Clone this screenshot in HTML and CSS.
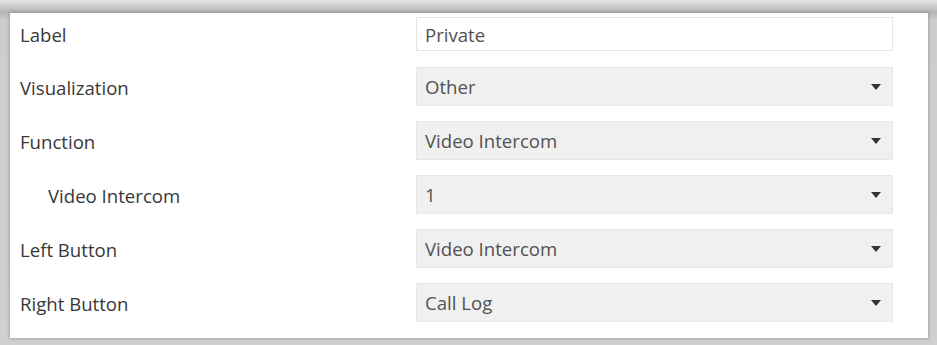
FILE: index.html
```html
<!DOCTYPE html>
<html>
<head>
<meta charset="utf-8">
<link rel="stylesheet" href="styles.css">
</head>
<body>
<div class="frame">
  <div class="panel">
    <div class="row first">
      <div class="label">Label</div>
      <div class="field input">Private</div>
    </div>
    <div class="row">
      <div class="label">Visualization</div>
      <div class="field select"><span>Other</span><i class="arrow"></i></div>
    </div>
    <div class="row">
      <div class="label">Function</div>
      <div class="field select"><span>Video Intercom</span><i class="arrow"></i></div>
    </div>
    <div class="row">
      <div class="label indent">Video Intercom</div>
      <div class="field select"><span>1</span><i class="arrow"></i></div>
    </div>
    <div class="row">
      <div class="label">Left Button</div>
      <div class="field select"><span>Video Intercom</span><i class="arrow"></i></div>
    </div>
    <div class="row">
      <div class="label">Right Button</div>
      <div class="field select"><span>Call Log</span><i class="arrow"></i></div>
    </div>
  </div>
</div>
</body>
</html>
```
FILE: styles.css
```css
html, body {
  margin: 0;
  padding: 0;
}
body {
  width: 937px;
  height: 345px;
  overflow: hidden;
  background: linear-gradient(to bottom, #e6e6e6 0px, #b6b6b6 12px, #cdcdcd 20px, #d0d0d0 100%);
  font-family: "Open Sans", "Noto Sans", sans-serif;
}
.frame {
  padding: 13px 9px 7px 10px;
}
.panel {
  background: #fff;
  width: 918px;
  height: 325px;
  box-sizing: border-box;
  padding: 4px 35px 0 10px;
  display: flex;
  flex-direction: column;
  gap: 15px;
  box-shadow: 0 0 3px 1px rgba(0,0,0,0.2);
}
.row {
  display: grid;
  grid-template-columns: 396px 477px;
  align-items: center;
}
.row.first {
  margin-bottom: 1px;
}
.label {
  font-size: 18.6px;
  color: #383838;
  padding-top: 1px;
}
.label.indent {
  padding-left: 28px;
}
.field {
  box-sizing: border-box;
  font-size: 18.6px;
  color: #525252;
  padding-left: 8px;
  display: flex;
  align-items: center;
}
.input {
  height: 34px;
  background: #fff;
  border: 1px solid #e5e5e5;
}
.select {
  height: 39px;
  background: #f0f0f0;
  border: 1px solid #e7e7e7;
  justify-content: space-between;
  padding-right: 11px;
}
.arrow {
  width: 0;
  height: 0;
  border-left: 5.5px solid transparent;
  border-right: 5.5px solid transparent;
  border-top: 6px solid #333;
}
```
